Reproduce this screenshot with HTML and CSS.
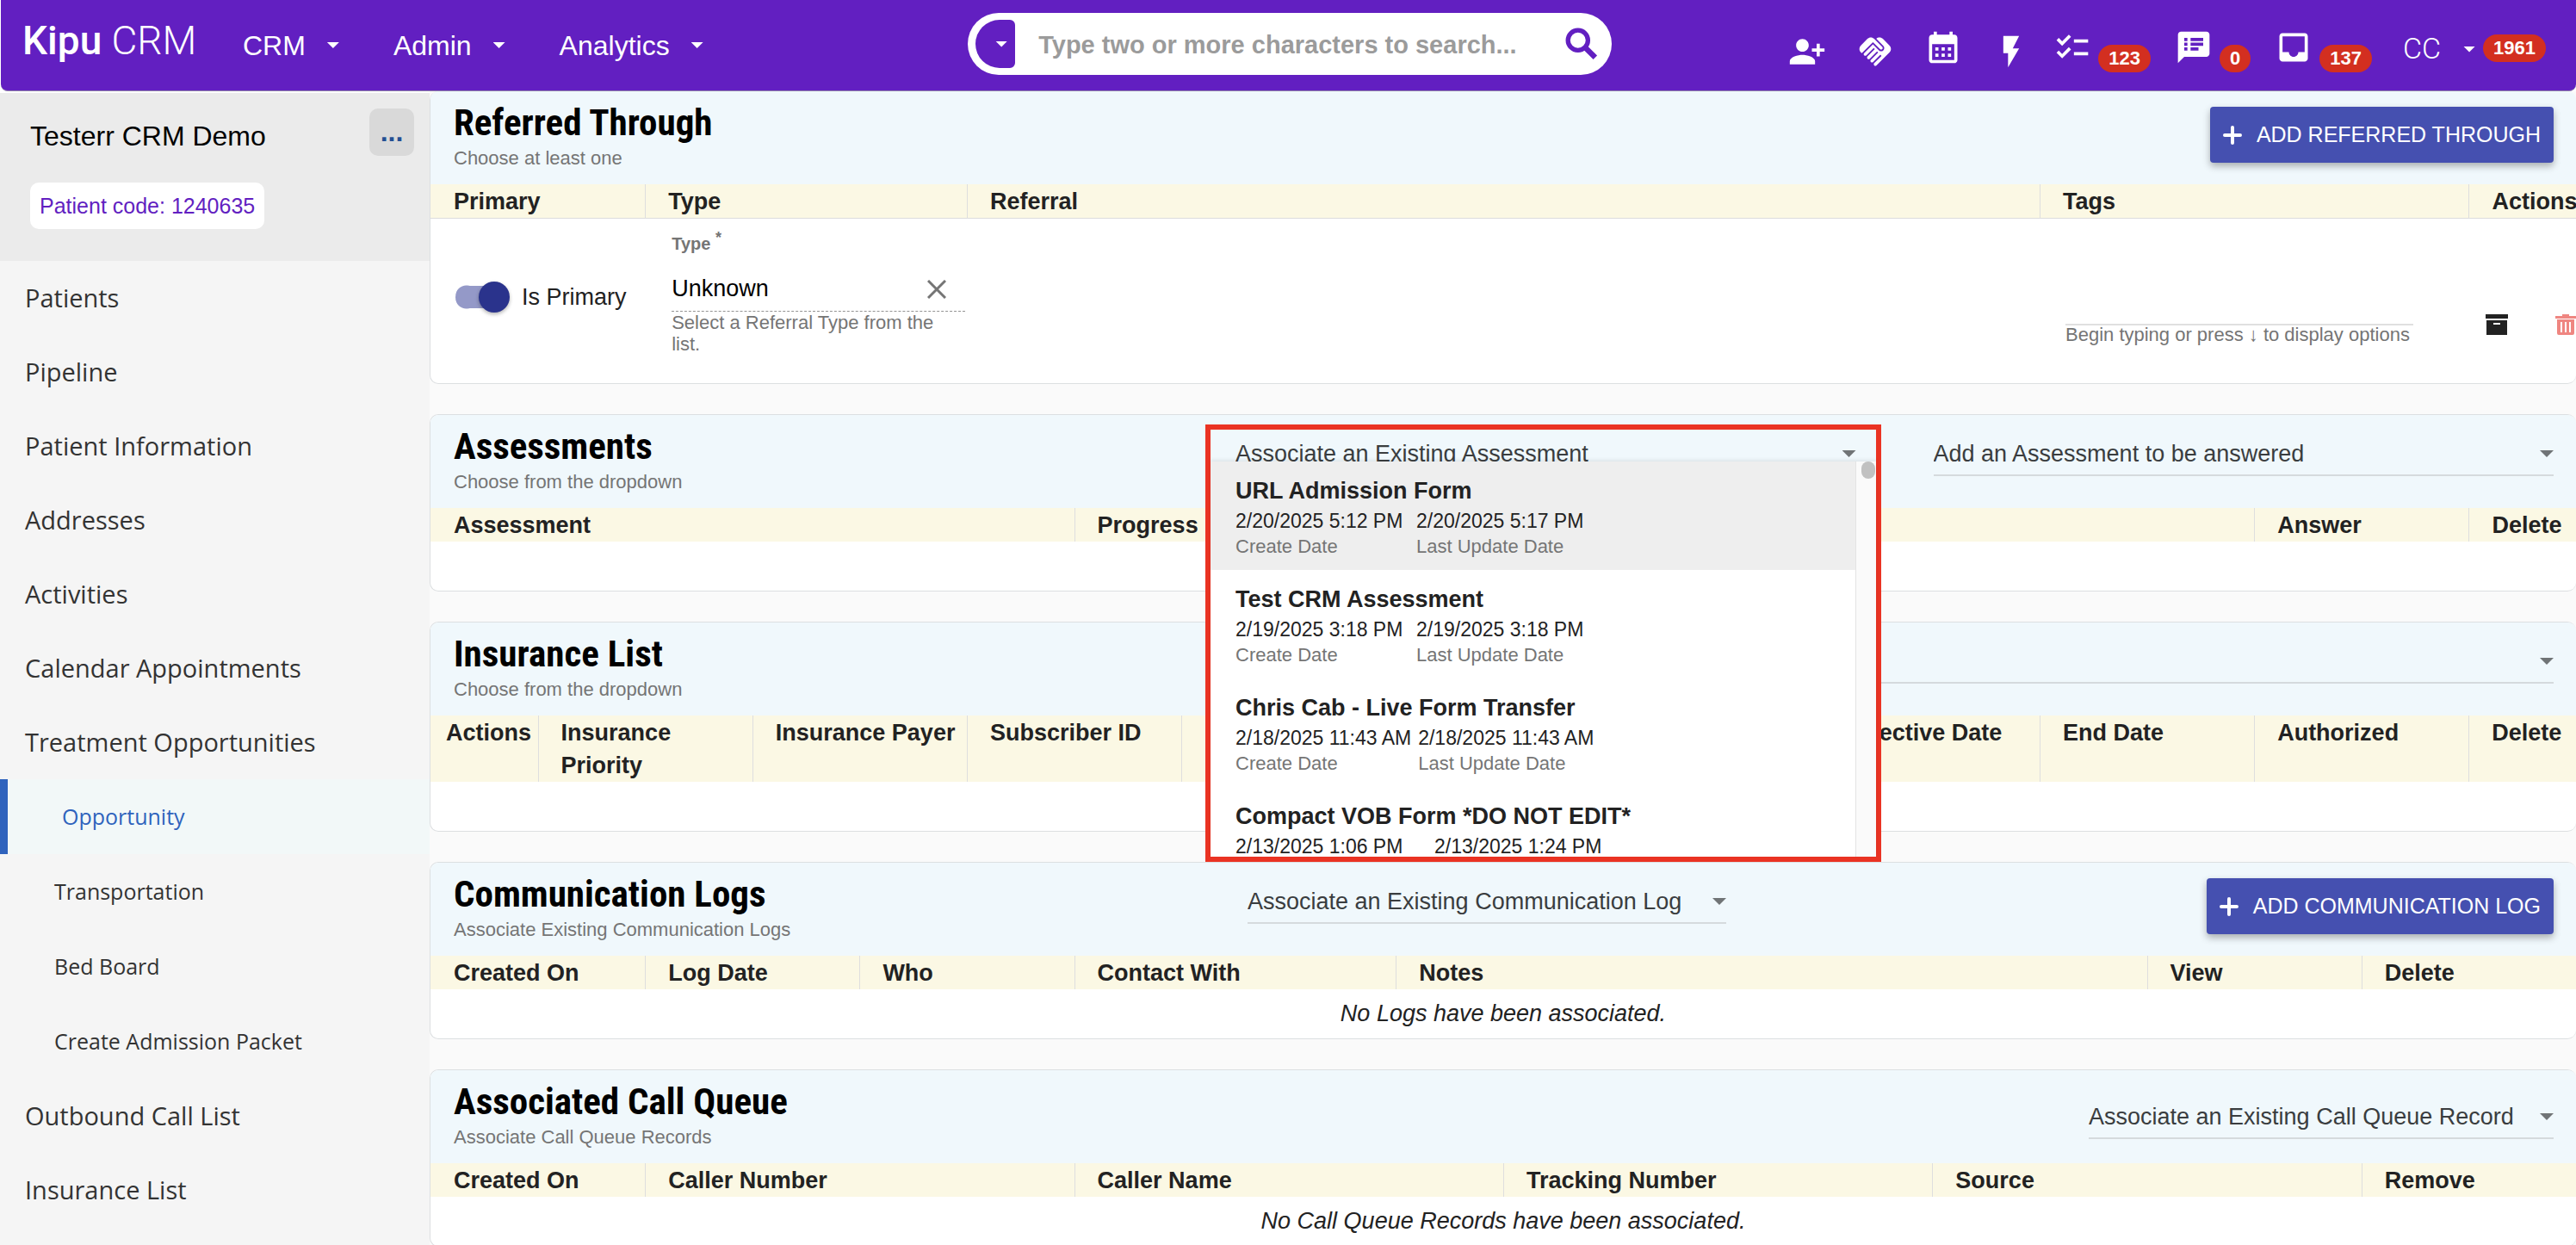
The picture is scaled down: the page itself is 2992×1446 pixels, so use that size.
FILE: index.html
```html
<!DOCTYPE html>
<html lang="en">
<head>
    <meta charset="UTF-8">
    <meta name="viewport" content="width=device-width, initial-scale=1.0">
    <title>Kipu CRM</title>
    <link rel="stylesheet" href="styles.css">
</head>
<body>

<header class="navbar">
    <a class="logo" href="#"><b>Kipu</b> CRM</a>
    <nav class="main-nav">
        <a href="#">CRM <span class="caret"></span></a>
        <a href="#">Admin <span class="caret"></span></a>
        <a href="#">Analytics <span class="caret"></span></a>
    </nav>
    <form class="search">
        <button type="button" class="search-scope" aria-label="Search scope"><span class="caret"></span></button>
        <input type="text" aria-label="Search" placeholder="Type two or more characters to search...">
        <button type="button" class="search-btn" aria-label="Search">
            <svg viewBox="0 0 36 36"><circle cx="14" cy="14" r="11" fill="none" stroke="currentColor" stroke-width="5"/><path d="M22 22l11 11" stroke="currentColor" stroke-width="6"/></svg>
        </button>
    </form>
    <div class="tools">
        <a class="tool low" href="#" aria-label="Add person"><svg viewBox="0 0 24 24"><path d="M13 8c0-2.21-1.79-4-4-4S5 5.79 5 8s1.79 4 4 4 4-1.79 4-4zm2 2v2h3v3h2v-3h3v-2h-3V7h-2v3h-3zM1 18v2h16v-2c0-2.66-5.33-4-8-4s-8 1.34-8 4z"/></svg></a>
        <a class="tool low" href="#" aria-label="Referrals"><svg viewBox="0 0 24 24"><path d="M16.48,10.41c-0.39,0.39-1.04,0.39-1.43,0l-4.47-4.46l-7.05,7.04l-0.66-0.63c-1.17-1.17-1.17-3.07,0-4.24l4.24-4.24 c1.17-1.17,3.07-1.17,4.24,0L16.48,9C16.87,9.39,16.87,10.02,16.48,10.41z M17.18,8.29c0.78,0.78,0.78,2.05,0,2.83 c-1.27,1.27-2.61,0.22-2.83,0l-3.76-3.76l-5.57,5.57c-0.39,0.39-0.39,1.02,0,1.41c0.39,0.39,1.02,0.39,1.42,0l4.62-4.62l0.71,0.71 l-4.62,4.62c-0.39,0.39-0.39,1.02,0,1.41c0.39,0.39,1.02,0.39,1.42,0l4.62-4.62l0.71,0.71l-4.62,4.62c-0.39,0.39-0.39,1.02,0,1.41 c0.39,0.39,1.02,0.39,1.41,0l4.62-4.62l0.71,0.71l-4.62,4.62c-0.39,0.39-0.39,1.02,0,1.41c0.39,0.39,1.02,0.39,1.41,0l8.32-8.34 c1.17-1.17,1.17-3.07,0-4.24l-4.24-4.24c-1.15-1.15-3.01-1.17-4.18-0.06L17.18,8.29z"/></svg></a>
        <a class="tool" href="#" aria-label="Calendar"><svg viewBox="0 0 24 24"><path d="M19 4h-1V2h-2v2H8V2H6v2H5c-1.11 0-1.99.9-1.99 2L3 20c0 1.1.89 2 2 2h14c1.1 0 2-.9 2-2V6c0-1.1-.9-2-2-2zm0 16H5V10h14v10zM9 14H7v-2h2v2zm4 0h-2v-2h2v2zm4 0h-2v-2h2v2zm-8 4H7v-2h2v2zm4 0h-2v-2h2v2zm4 0h-2v-2h2v2z"/></svg></a>
        <a class="tool low" href="#" aria-label="Quick actions"><svg viewBox="0 0 24 24"><path d="M7 2v11h3v9l7-12h-4l4-8z"/></svg></a>
        <a class="tool counted" href="#" aria-label="Tasks"><svg viewBox="0 0 24 24"><path d="M22,7h-9v2h9V7z M22,15h-9v2h9V15z M5.54,11L2,7.46l1.41-1.41l2.12,2.12l4.24-4.24l1.41,1.41L5.54,11z M5.54,19L2,15.46l1.41-1.41 l2.12,2.12l4.24-4.24l1.41,1.41L5.54,19z"/></svg><span class="count">123</span></a>
        <a class="tool counted" href="#" aria-label="Notes"><svg viewBox="0 0 24 24"><path d="M20 2H4c-1.1 0-1.99.9-1.99 2L2 22l4-4h14c1.1 0 2-.9 2-2V4c0-1.1-.9-2-2-2zM8 14H6v-2h2v2zm0-3H6V9h2v2zm0-3H6V6h2v2zm7 6h-5v-2h5v2zm3-3h-8V9h8v2zm0-3h-8V6h8v2z"/></svg><span class="count">0</span></a>
        <a class="tool counted" href="#" aria-label="Inbox"><svg viewBox="0 0 24 24"><path d="M19 3H4.99c-1.11 0-1.98.89-1.98 2L3 19c0 1.1.88 2 1.99 2H19c1.1 0 2-.9 2-2V5c0-1.11-.9-2-2-2zm0 12h-4c0 1.66-1.35 3-3 3s-3-1.34-3-3H4.99V5H19v10z"/></svg><span class="count">137</span></a>
        <a class="user" href="#">CC <span class="caret"></span><span class="count">1961</span></a>
    </div>
</header>

<div class="layout">
    <aside class="sidebar">
        <div class="patient">
            <div class="patient-top">
                <span class="patient-name">Testerr CRM Demo</span>
                <button class="more" aria-label="More">...</button>
            </div>
            <span class="patient-code">Patient code: 1240635</span>
        </div>
        <nav class="side-nav">
            <a href="#">Patients</a>
            <a href="#">Pipeline</a>
            <a href="#">Patient Information</a>
            <a href="#">Addresses</a>
            <a href="#">Activities</a>
            <a href="#">Calendar Appointments</a>
            <a href="#">Treatment Opportunities</a>
            <a class="sub active" href="#">Opportunity</a>
            <a class="sub" href="#">Transportation</a>
            <a class="sub" href="#">Bed Board</a>
            <a class="sub" href="#">Create Admission Packet</a>
            <a href="#">Outbound Call List</a>
            <a href="#">Insurance List</a>
        </nav>
    </aside>

    <main class="content">
        <!-- Referred Through -->
        <section class="card first">
            <div class="card-head">
                <div>
                    <h2>Referred Through</h2>
                    <p>Choose at least one</p>
                </div>
                <button class="add-btn"><svg viewBox="0 0 22 22"><path d="M11 2v18M2 11h18"/></svg>ADD REFERRED THROUGH</button>
            </div>
            <table class="lined">
                <thead>
                    <tr>
                        <th class="w10">Primary</th>
                        <th class="w15">Type</th>
                        <th class="w50">Referral</th>
                        <th class="w20">Tags</th>
                        <th class="w5">Actions</th>
                    </tr>
                </thead>
                <tbody>
                    <tr class="referral-row">
                        <td>
                            <label class="toggle"><input type="checkbox" checked> Is Primary</label>
                        </td>
                        <td class="type-cell">
                            <label for="type">Type <sup>*</sup></label>
                            <div class="type-field">
                                <input type="text" id="type" value="Unknown">
                                <button aria-label="Clear"><svg viewBox="0 0 22 22"><path d="M1 1l20 20M21 1L1 21"/></svg></button>
                            </div>
                            <p class="hint">Select a Referral Type from the list.</p>
                        </td>
                        <td></td>
                        <td class="tags-cell">
                            <input type="text" id="tags">
                            <label class="hint" for="tags">Begin typing or press ↓ to display options</label>
                        </td>
                        <td>
                            <div class="row-actions">
                                <button aria-label="Archive"><svg viewBox="0 0 26 26"><path d="M0 1h26v5H0zM1 8h24v17H1zM9 11v2h8v-2z" fill-rule="evenodd"/></svg></button>
                                <button class="trash" aria-label="Delete"><svg viewBox="0 0 26 26"><path d="M1 3h8V1h8v2h8v3H1zM3 7h20v16q0 2-2 2H5q-2 0-2-2zM7 10v12h2V10zM12 10v12h2V10zM17 10v12h2V10z" fill-rule="evenodd"/></svg></button>
                            </div>
                        </td>
                    </tr>
                </tbody>
            </table>
        </section>

        <!-- Assessments -->
        <section class="card">
            <div class="card-head with-selects">
                <div>
                    <h2>Assessments</h2>
                    <p>Choose from the dropdown</p>
                </div>
                <div class="selects">
                    <div class="select">
                        <select aria-label="Associate an Existing Assessment"><option>Associate an Existing Assessment</option></select>
                        <div class="picker">
                            <div class="picker-panel">
                                <ul class="picker-list">
                                    <li class="current">
                                        <strong>URL Admission Form</strong>
                                        <dl>
                                            <div><dd>2/20/2025 5:12 PM</dd><dt>Create Date</dt></div>
                                            <div><dd>2/20/2025 5:17 PM</dd><dt>Last Update Date</dt></div>
                                        </dl>
                                    </li>
                                    <li>
                                        <strong>Test CRM Assessment</strong>
                                        <dl>
                                            <div><dd>2/19/2025 3:18 PM</dd><dt>Create Date</dt></div>
                                            <div><dd>2/19/2025 3:18 PM</dd><dt>Last Update Date</dt></div>
                                        </dl>
                                    </li>
                                    <li>
                                        <strong>Chris Cab - Live Form Transfer</strong>
                                        <dl>
                                            <div><dd>2/18/2025 11:43 AM</dd><dt>Create Date</dt></div>
                                            <div><dd>2/18/2025 11:43 AM</dd><dt>Last Update Date</dt></div>
                                        </dl>
                                    </li>
                                    <li>
                                        <strong>Compact VOB Form *DO NOT EDIT*</strong>
                                        <dl class="spread">
                                            <div><dd>2/13/2025 1:06 PM</dd></div>
                                            <div><dd>2/13/2025 1:24 PM</dd></div>
                                        </dl>
                                    </li>
                                </ul>
                                <div class="scrollbar"><div class="thumb"></div></div>
                            </div>
                        </div>
                    </div>
                    <div class="select">
                        <select aria-label="Add an Assessment to be answered"><option>Add an Assessment to be answered</option></select>
                    </div>
                </div>
            </div>
            <table>
                <thead>
                    <tr>
                        <th class="w30">Assessment</th>
                        <th class="w55">Progress</th>
                        <th class="w10">Answer</th>
                        <th class="w5">Delete</th>
                    </tr>
                </thead>
                <tbody><tr><td colspan="4"></td></tr></tbody>
            </table>
        </section>

        <!-- Insurance List -->
        <section class="card">
            <div class="card-head with-selects">
                <div>
                    <h2>Insurance List</h2>
                    <p>Choose from the dropdown</p>
                </div>
                <div class="selects">
                    <div class="select">
                        <select aria-label="Insurance"><option></option></select>
                    </div>
                </div>
            </div>
            <table>
                <thead>
                    <tr>
                        <th class="w5 tight">Actions</th>
                        <th class="w10">Insurance Priority</th>
                        <th class="w10">Insurance Payer</th>
                        <th class="w10">Subscriber ID</th>
                        <th class="w30"></th>
                        <th class="w10">Effective Date</th>
                        <th class="w10">End Date</th>
                        <th class="w10">Authorized</th>
                        <th class="w5">Delete</th>
                    </tr>
                </thead>
                <tbody><tr><td colspan="9"></td></tr></tbody>
            </table>
        </section>

        <!-- Communication Logs -->
        <section class="card">
            <div class="card-head with-log">
                <div>
                    <h2>Communication Logs</h2>
                    <p>Associate Existing Communication Logs</p>
                </div>
                <div class="select">
                    <select aria-label="Associate an Existing Communication Log"><option>Associate an Existing Communication Log</option></select>
                </div>
                <button class="add-btn"><svg viewBox="0 0 22 22"><path d="M11 2v18M2 11h18"/></svg>ADD COMMUNICATION LOG</button>
            </div>
            <table>
                <thead>
                    <tr>
                        <th class="w10">Created On</th>
                        <th class="w10">Log Date</th>
                        <th class="w10">Who</th>
                        <th class="w15">Contact With</th>
                        <th class="w35">Notes</th>
                        <th class="w10">View</th>
                        <th class="w10">Delete</th>
                    </tr>
                </thead>
                <tbody><tr><td class="empty" colspan="7">No Logs have been associated.</td></tr></tbody>
            </table>
        </section>

        <!-- Associated Call Queue -->
        <section class="card">
            <div class="card-head">
                <div>
                    <h2>Associated Call Queue</h2>
                    <p>Associate Call Queue Records</p>
                </div>
                <div class="select queue">
                    <select aria-label="Associate an Existing Call Queue Record"><option>Associate an Existing Call Queue Record</option></select>
                </div>
            </div>
            <table>
                <thead>
                    <tr>
                        <th class="w10">Created On</th>
                        <th class="w20">Caller Number</th>
                        <th class="w20">Caller Name</th>
                        <th class="w20">Tracking Number</th>
                        <th class="w20">Source</th>
                        <th class="w10">Remove</th>
                    </tr>
                </thead>
                <tbody><tr><td class="empty" colspan="6">No Call Queue Records have been associated.</td></tr></tbody>
            </table>
        </section>
    </main>
</div>

</body>
</html>
```

FILE: styles.css
```css
* {
    box-sizing: border-box;
}
body {
    margin: 0;
    height: 100vh;
    overflow: hidden;
    display: flex;
    flex-direction: column;
    font-family: "Liberation Sans", Arial, sans-serif;
    font-size: 27px;
    color: #222;
    background-color: #fff;
}
a {
    color: inherit;
    text-decoration: none;
}
button, input, select {
    font-family: inherit;
    font-size: inherit;
    color: inherit;
    border: none;
    background: none;
    padding: 0;
    margin: 0;
    outline: none;
}
button {
    cursor: pointer;
}
svg {
    display: block;
    fill: currentColor;
}
h2, p, ul, dl, dd {
    margin: 0;
    padding: 0;
}

/* top bar */
.navbar {
    display: flex;
    flex: 0 0 106px;
    margin-left: 1px;
    padding: 0 35px 0 25px;
    color: #fff;
    background-color: #621fc1;
    border-bottom: 1px solid #8f82a8;
    border-radius: 0 0 8px 8px;
}
.logo {
    font-family: Roboto, sans-serif;
    font-size: 46px;
    font-weight: 300;
    line-height: 94px;
    width: 256px;
}
.logo b {
    font-weight: 500;
}
.main-nav {
    display: flex;
    gap: 63px;
    font-size: 32px;
    line-height: 104px;
}
.main-nav a {
    display: flex;
    align-items: center;
    gap: 25px;
}
.caret {
    width: 14px;
    height: 7px;
    background-color: currentColor;
    clip-path: polygon(0 0, 100% 0, 50% 100%);
}
.search {
    display: flex;
    align-items: center;
    width: 748px;
    height: 72px;
    margin: 15px 0 0 auto;
    padding: 0 16px 0 9px;
    border-radius: 36px;
    color: #621fc1;
    background-color: #fff;
}
.search-scope {
    display: flex;
    align-items: center;
    justify-content: flex-end;
    width: 46px;
    height: 56px;
    padding-right: 9px;
    border-radius: 28px 6px 6px 28px;
    color: #fff;
    background-color: #621fc1;
}
.search input {
    flex: 1;
    min-width: 0;
    padding: 3px 0 0 27px;
    font-size: 29px;
    font-weight: bold;
}
.search input::placeholder {
    color: #9b9b9b;
}
.search-btn svg {
    width: 38px;
    height: 38px;
}
.tools {
    display: flex;
    align-items: flex-start;
    margin-left: 205px;
    padding-top: 33px;
}
.tool {
    display: flex;
    margin-right: 35px;
}
.tool svg {
    width: 44px;
    height: 44px;
}
.tool.low {
    margin-top: 5px;
}
.tool.counted {
    gap: 8px;
    margin-right: 28px;
}
.tool.low + .counted {
    margin-left: -8px;
}
.count {
    height: 32px;
    padding: 0 12px;
    border-radius: 16px;
    font-family: "Liberation Sans", Arial, sans-serif;
    font-size: 22px;
    font-weight: bold;
    line-height: 32px;
    background-color: #d32f20;
}
.tool .count {
    margin-top: 19px;
}
.user {
    display: flex;
    align-items: center;
    margin: 3px 0 0 8px;
    font-family: Roboto, sans-serif;
    font-size: 34px;
    font-weight: 300;
}
.user .caret {
    margin: 2px 9px 0 26px;
}

/* sidebar */
.layout {
    display: flex;
    flex: 1;
    min-height: 0;
}
.sidebar {
    flex: 0 0 499px;
    margin-top: 2px;
    background-color: #f5f5f5;
}
.patient {
    height: 195px;
    padding: 18px 18px 0 35px;
    background-color: #ebebeb;
}
.patient-top {
    display: flex;
    justify-content: space-between;
    align-items: flex-start;
}
.patient-name {
    font-size: 32px;
    line-height: 64px;
    color: #000;
}
.more {
    width: 52px;
    height: 55px;
    border-radius: 10px;
    font-size: 32px;
    font-weight: bold;
    color: #234f93;
    background-color: #d9d9d9;
}
.patient-code {
    display: inline-block;
    margin-top: 22px;
    padding: 0 11px;
    border-radius: 10px;
    font-size: 25px;
    line-height: 54px;
    color: #621fc1;
    background-color: #fff;
}
.side-nav a {
    display: block;
    padding-left: 29px;
    font-family: "Open Sans", sans-serif;
    font-size: 29px;
    line-height: 86px;
    color: #333;
}
.side-nav a.sub {
    padding-left: 63px;
    font-size: 25px;
    line-height: 87px;
}
.side-nav a.active {
    border-left: 9px solid #2f63bd;
    color: #2f63bd;
    background-color: #f2f8f8;
}

/* cards */
.content {
    flex: 1;
    min-width: 0;
    overflow: hidden;
    background-color: #fafafa;
}
.card {
    margin-bottom: 35px;
    border: 1px solid #dcdfe1;
    border-right: none;
    border-radius: 10px;
    background-color: #fff;
}
.card.first {
    border-top: none;
}
.card-head {
    display: flex;
    justify-content: space-between;
    height: 108px;
    padding: 0 26px 0 27px;
    border-radius: 9px 9px 0 0;
    background-color: #f0f8fc;
}
.card-head h2 {
    padding-top: 12px;
    font-family: "Roboto Condensed", Roboto, sans-serif;
    font-size: 43px;
    line-height: 48px;
    color: #000;
}
.card-head p {
    font-size: 22px;
    line-height: 36px;
    color: #757575;
}
.with-selects {
    display: grid;
    grid-template-columns: 908px 1fr;
}
.with-log {
    display: grid;
    grid-template-columns: 922px 556px 1fr;
}
.with-log .add-btn {
    justify-self: end;
}
.add-btn {
    display: flex;
    align-items: center;
    gap: 17px;
    height: 65px;
    margin-top: 18px;
    padding: 0 15px;
    border-radius: 4px;
    font-size: 25px;
    color: #fff;
    background-color: #4550b0;
    box-shadow: 0 4px 8px rgba(0, 0, 0, 0.3);
}
.add-btn svg {
    width: 22px;
    height: 22px;
    stroke: #fff;
    stroke-width: 4;
    stroke-linecap: round;
}
.selects {
    display: flex;
    gap: 90px;
}
.select {
    position: relative;
    flex: 1;
}
.select.queue {
    flex: 0 0 540px;
    margin-top: 9px;
}
.select select {
    display: block;
    width: 100%;
    height: 71px;
    padding-top: 20px;
    border-bottom: 2px solid #d5dadd;
    appearance: none;
    color: #3a3d3f;
}
.select::after {
    content: "";
    position: absolute;
    right: 0;
    top: 41px;
    width: 16px;
    height: 8px;
    background-color: #707476;
    clip-path: polygon(0 0, 100% 0, 50% 100%);
}

/* open picker, laid over the cards below */
.picker {
    position: absolute;
    z-index: 2;
    top: 11px;
    left: -35px;
    right: -29px;
    height: 508px;
    padding-top: 37px;
    border: 6px solid #ea3323;
}
.picker-panel {
    display: flex;
    height: 100%;
    overflow: hidden;
    background-color: #fff;
    box-shadow: 0 -2px 4px rgba(0, 0, 0, 0.08);
}
.picker-list {
    flex: 1;
    list-style: none;
}
.picker-list li {
    height: 126px;
    padding: 15px 29px 0;
}
.picker-list li.current {
    background-color: #eee;
}
.picker-list strong {
    display: block;
    line-height: 39px;
}
.picker-list dl {
    display: flex;
    gap: 8px;
    line-height: 30px;
}
.picker-list dl div {
    min-width: 202px;
}
.picker-list dl.spread div {
    min-width: 223px;
}
.picker-list dd {
    font-size: 23px;
}
.picker-list dt {
    font-size: 22px;
    color: #757575;
}
.scrollbar {
    width: 24px;
    padding-left: 6px;
    border-left: 1px solid #e4e4e4;
    background-color: #fafafa;
}
.thumb {
    width: 16px;
    height: 20px;
    border-radius: 8px;
    background-color: #c1c1c1;
}

/* tables */
table {
    width: 100%;
    table-layout: fixed;
    border-collapse: separate;
    border-spacing: 0;
}
th {
    padding: 1px 0 0 26px;
    border-left: 1px solid #dedede;
    line-height: 38px;
    text-align: left;
    vertical-align: top;
    background-color: #fbf8e4;
}
th:first-child {
    padding-left: 27px;
    border-left: none;
}
th.tight:first-child {
    padding-left: 18px;
}
.lined th {
    border-bottom: 1px solid #dcdcdc;
}
td {
    height: 57px;
    padding: 0;
}
.w5 { width: 5%; }
.w10 { width: 10%; }
.w15 { width: 15%; }
.w20 { width: 20%; }
.w30 { width: 30%; }
.w35 { width: 35%; }
.w50 { width: 50%; }
.w55 { width: 55%; }
.empty {
    text-align: center;
    font-style: italic;
}

/* referral row */
.referral-row td {
    height: 191px;
    vertical-align: top;
}
.toggle {
    display: flex;
    align-items: center;
    gap: 14px;
    padding: 73px 0 0 29px;
}
.toggle input {
    appearance: none;
    display: flex;
    align-items: center;
    justify-content: flex-end;
    width: 63px;
    height: 36px;
    border-radius: 18px;
    background: radial-gradient(circle at 13px 18px, #9499c8 13px, transparent 14px), linear-gradient(#9499c8, #9499c8) 13px 50% / 32px 26px no-repeat;
}
.toggle input::after {
    content: "";
    width: 36px;
    height: 36px;
    border-radius: 50%;
    background-color: #2a338c;
    box-shadow: 0 2px 4px rgba(0, 0, 0, 0.3);
}
.referral-row .type-cell {
    padding: 14px 2px 0 31px;
}
.type-cell label {
    display: block;
    font-size: 20px;
    font-weight: bold;
    line-height: 30px;
    color: #757575;
}
.type-cell sup {
    font-size: 18px;
    line-height: 0;
}
.type-field {
    display: flex;
    align-items: center;
    height: 64px;
    padding: 12px 22px 0 0;
    border-bottom: 1px dashed #949494;
}
.type-field input {
    flex: 1;
    min-width: 0;
    color: #000;
}
.type-field svg {
    width: 22px;
    height: 22px;
    stroke: #757575;
    stroke-width: 3;
}
.hint {
    display: block;
    font-size: 22px;
    line-height: 25px;
    color: #757575;
}
.type-cell .hint {
    width: 310px;
}
.referral-row .tags-cell {
    padding: 84px 64px 0 30px;
}
.tags-cell input {
    display: block;
    width: 100%;
    height: 40px;
    border-bottom: 2px solid #e0e0e0;
}
.tags-cell .hint {
    line-height: 22px;
    white-space: nowrap;
}
.row-actions {
    display: flex;
    gap: 54px;
    padding: 110px 0 0 20px;
}
.row-actions svg {
    width: 26px;
    height: 26px;
}
.row-actions .trash {
    color: #ef8681;
}
```
